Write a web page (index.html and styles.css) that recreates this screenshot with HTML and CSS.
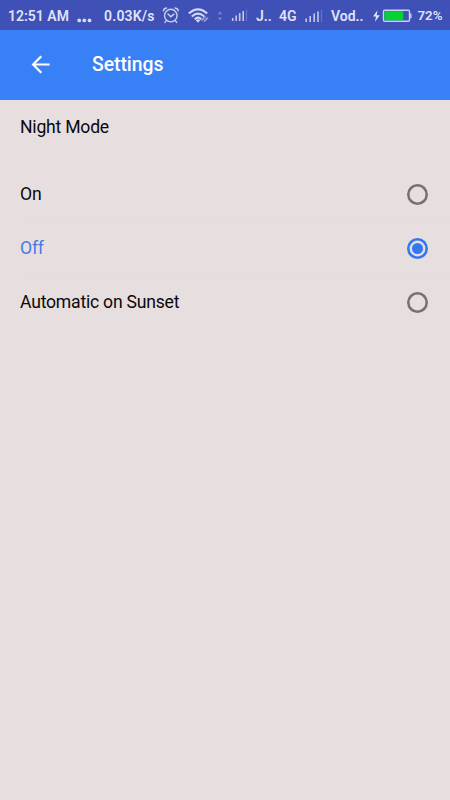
FILE: index.html
```html
<!DOCTYPE html>
<html lang="en">
<head>
<meta charset="utf-8">
<title>Settings</title>
<link rel="stylesheet" href="styles.css">
</head>
<body>
<div class="status">
  <span class="time">12:51 AM</span>
  <svg viewBox="0 0 27 30"><g fill="#d6daf5"><circle cx="2.2" cy="19.4" r="1.9"/><circle cx="7.3" cy="19.4" r="1.9"/><circle cx="12.5" cy="19.4" r="1.9"/></g></svg>
  <span class="speed">0.03K/s</span>
  <svg viewBox="0 0 26 30"><g fill="none" stroke="#ccd1f1" stroke-width="1.4" stroke-linecap="round"><circle cx="8.8" cy="14.6" r="6.3"/><path d="M1.4 9.8Q1.7 7.4 4.5 7M13.1 7Q15.9 7.4 16.2 9.8M4.4 19.6l-1.5 1.8M13.2 19.6l1.5 1.8M6 13.1l2.8 2.7 3.1-2.7"/></g></svg>
  <svg viewBox="0 0 28 30"><g fill="none" stroke="#d3d7f5" stroke-width="2"><path d="M.8 12.5Q10 4.3 19.2 12.5M3.8 15.4Q10 9.8 16.2 15.4M6.7 18.2Q10 15 13.3 18.2"/></g><path d="M7.7 19.2Q10 17.2 12.3 19.2L10 21.7z" fill="#d3d7f5"/><path d="M13.5 19.5l4.1-4.1M16 20.7l4-4" stroke="#929bdc" stroke-width="1.8"/></svg>
  <svg viewBox="0 0 15 30"><path d="M1.8 13.3L4 10.3l2.2 3zM1.8 16.5L4 19.5l2.2-3z" fill="#7983cf"/></svg>
  <svg viewBox="0 0 25 30"><path d="M1.7 17v3M5.2 14.5V20M8.7 12v8M12.2 10v10" stroke="#c2c8ed" stroke-width="1.6"/><path d="M15.5 8.5V20" stroke="#6672c6" stroke-width="1.3"/></svg>
  <span class="carrier">J..</span>
  <span class="network">4G</span>
  <svg viewBox="0 0 26 30"><path d="M1.2 17.5V21M5.2 15V21M9.2 12.5V21M13 10.5V21" stroke="#c2c8ed" stroke-width="1.6"/><path d="M16.5 8.5V21" stroke="#6672c6" stroke-width="1.3"/></svg>
  <span class="carrier">Vod..</span>
  <svg viewBox="0 0 46 30"><path d="M5.5 9.2L1 15.5h3l-1 5.3 4.8-6.5H4.7z" fill="#e0e4fa"/><rect x="11.5" y="9.2" width="26" height="11.1" rx="1.2" fill="#3f50b6" stroke="#c9d3f0" stroke-width="1.4"/><path d="M12.5 10.2h18.8v9.1H12.5z" fill="#03d42f"/><path d="M38.8 12.5v4.8" stroke="#c9d3f0" stroke-width="1.4"/></svg>
  <span class="percent">72%</span>
</div>
<header class="toolbar">
  <svg class="back" viewBox="0 0 20 20"><path d="M18.6 9.5H2.3M10.3 1.3L2.1 9.5l8.2 8.2" fill="none" stroke="#fff" stroke-width="2.2"/></svg>
  <h1>Settings</h1>
</header>
<main>
  <h2>Night Mode</h2>
  <ul>
    <li><span>On</span><i class="radio"></i></li>
    <li class="selected"><span>Off</span><i class="radio"></i></li>
    <li><span>Automatic on Sunset</span><i class="radio"></i></li>
  </ul>
</main>
</body>
</html>
```
FILE: styles.css
```css
* { box-sizing: border-box; }
body {
  margin: 0;
  min-height: 800px;
  background: #e6dedf;
  color: #0b0909;
  font-family: Roboto, sans-serif;
}
.status {
  display: grid;
  grid-template-columns: 69px 27px 58px 26px 28px 15px 25px 23px 26px 26px 41px 46px 32px;
  align-items: center;
  height: 30px;
  padding-left: 8px;
  background: #3f50b6;
  color: #dfe3fa;
  font-size: 14px;
  font-weight: 600;
  line-height: 30px;
  white-space: nowrap;
}
.status svg { display: block; width: 100%; height: 30px; }
.status span { padding-top: 1px; }
.speed { letter-spacing: .2px; }
.status .percent { margin-left: -.5px; font-size: 13.3px; }
.toolbar {
  display: flex;
  align-items: center;
  height: 70px;
  padding: 0 31px 1px;
  background: #3880f5;
  color: #fff;
}
.back { width: 20px; height: 20px; }
h1 { margin: 0 0 0 41px; padding-top: 1px; font-size: 19.4px; font-weight: 500; line-height: 24px; letter-spacing: -.05px; }
h2 { margin: 0; padding: 15px 20px 0; height: 67px; font-size: 17.6px; font-weight: 400; line-height: 24px; letter-spacing: -.22px; }
ul { margin: 0; padding: 0; list-style: none; }
li {
  display: flex;
  align-items: center;
  justify-content: space-between;
  height: 54px;
  margin-left: 20px;
  padding-right: 22px;
  border-bottom: 1px solid #e3dcdc;
  font-size: 17.6px;
  line-height: 24px;
  letter-spacing: -.22px;
}
li:last-child { border-color: transparent; }
li span { padding-top: 1px; }
.radio {
  display: grid;
  place-items: center;
  width: 21px;
  height: 21px;
  margin-top: 2px;
  border-radius: 50%;
  box-shadow: inset 0 0 0 2.6px #777172;
}
.selected { color: #457be2; }
.selected .radio { box-shadow: inset 0 0 0 2.6px #3478ef; }
.selected .radio::before {
  content: "";
  width: 11px;
  height: 11px;
  border-radius: 50%;
  background: #3478ef;
}
```
